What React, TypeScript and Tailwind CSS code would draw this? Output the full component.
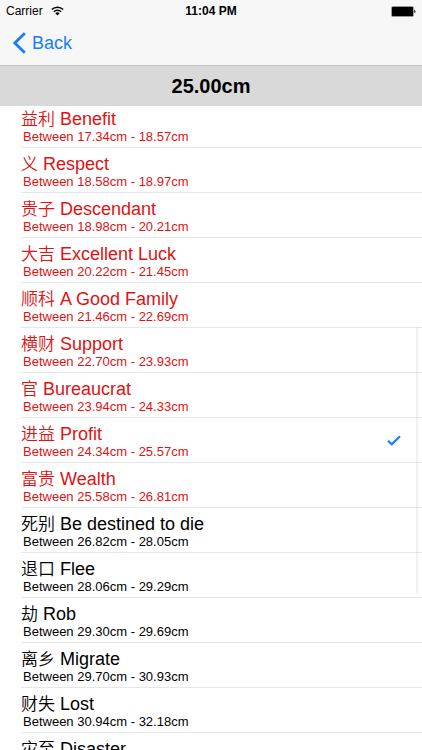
import React, { useState } from "react";

type Measure = {
  zh: string;
  en: string;
  from: string;
  to: string;
  lucky: boolean;
};

const measures: Measure[] = [
  { zh: "益利", en: "Benefit", from: "17.34", to: "18.57", lucky: true },
  { zh: "义", en: "Respect", from: "18.58", to: "18.97", lucky: true },
  { zh: "贵子", en: "Descendant", from: "18.98", to: "20.21", lucky: true },
  { zh: "大吉", en: "Excellent Luck", from: "20.22", to: "21.45", lucky: true },
  { zh: "顺科", en: "A Good Family", from: "21.46", to: "22.69", lucky: true },
  { zh: "横财", en: "Support", from: "22.70", to: "23.93", lucky: true },
  { zh: "官", en: "Bureaucrat", from: "23.94", to: "24.33", lucky: true },
  { zh: "进益", en: "Profit", from: "24.34", to: "25.57", lucky: true },
  { zh: "富贵", en: "Wealth", from: "25.58", to: "26.81", lucky: true },
  { zh: "死别", en: "Be destined to die", from: "26.82", to: "28.05", lucky: false },
  { zh: "退口", en: "Flee", from: "28.06", to: "29.29", lucky: false },
  { zh: "劫", en: "Rob", from: "29.30", to: "29.69", lucky: false },
  { zh: "离乡", en: "Migrate", from: "29.70", to: "30.93", lucky: false },
  { zh: "财失", en: "Lost", from: "30.94", to: "32.18", lucky: false },
  { zh: "灾至", en: "Disaster", from: "32.19", to: "33.42", lucky: false },
];

function StatusBar() {
  return (
    <div className="grid h-5 grid-cols-3 items-center pt-0.5 pl-1.5 pr-1.5 text-xs text-black">
      <div className="flex items-center gap-2">
        <span>Carrier</span>
        <svg width="13" height="10" viewBox="0 0 13 10" fill="none" stroke="currentColor" strokeWidth="1.5" aria-hidden="true">
          <path d="M.8 3.5a8.2 8.2 0 0 1 11.4 0" />
          <path d="M2.8 5.7a5.3 5.3 0 0 1 7.4 0" />
          <path d="M4.3 7.2a3.2 3.2 0 0 1 4.4 0L6.5 9.6z" fill="currentColor" stroke="none" />
        </svg>
      </div>
      <span className="text-center font-bold">11:04 PM</span>
      <svg className="justify-self-end" width="25" height="11" viewBox="0 0 25 11" aria-hidden="true">
        <rect x=".3" y=".3" width="22.4" height="10.4" rx="1.5" fill="#777" />
        <rect x="1" y="1" width="21" height="9" rx=".8" fill="#000" />
        <path d="M23.3 3.8c1.6.4 1.6 3 0 3.4z" fill="#000" />
      </svg>
    </div>
  );
}

export default function App() {
  const [selected, setSelected] = useState("Profit");

  return (
    <div className="relative h-screen overflow-hidden bg-white font-['Liberation_Sans','Noto_Sans_CJK_SC',sans-serif]">
      {/* Navigation */}
      <header className="border-b border-[#c4c4c4] bg-[#f7f7f7]">
        <StatusBar />
        <nav className="flex h-[45px] items-center pl-3">
          <button type="button" className="flex items-center gap-1.5 text-lg leading-6 text-[#147efb]">
            <svg width="14" height="22" viewBox="0 0 14 22" fill="none" stroke="currentColor" strokeWidth="2.8" aria-hidden="true">
              <path d="M12.8 1.3L2.8 11l10 9.7" />
            </svg>
            Back
          </button>
        </nav>
      </header>

      <h1 className="flex h-10 items-center justify-center bg-[#d9d9d9] text-xl font-bold text-black">25.00cm</h1>

      {/* Measurements */}
      <ul className="pl-[21px]">
        {measures.map((m) => (
          <li key={m.en} className="group border-b border-[#e6e6e8]">
            <button
              type="button"
              onClick={() => setSelected(m.en)}
              className={`flex w-full items-center justify-between pr-[21px] text-left ${m.lucky ? "text-[#e01212]" : "text-black"}`}
            >
              <span className="flex flex-col pt-1 pb-0.5 group-first:pt-px">
                <span className="flex h-[22px] items-baseline gap-[5px] text-lg leading-[22px]">
                  <span className="font-['Noto_Sans_CJK_SC',sans-serif] text-[17px] leading-[22px] font-[350]">{m.zh}</span>
                  <span>{m.en}</span>
                </span>
                <span className="pl-0.5 text-[13px] leading-4">
                  Between {m.from}cm - {m.to}cm
                </span>
              </span>
              {selected === m.en && (
                <svg width="14" height="11" viewBox="0 0 14 11" fill="none" stroke="#147efb" strokeWidth="2.2" aria-label="Selected">
                  <path d="M1 5.7l3.8 3.6L13 1.2" />
                </svg>
              )}
            </button>
          </li>
        ))}
      </ul>

      {/* Scroll indicator */}
      <div className="absolute top-[327px] right-1 h-[267px] w-0.5 rounded-full bg-black/5" />
    </div>
  );
}
